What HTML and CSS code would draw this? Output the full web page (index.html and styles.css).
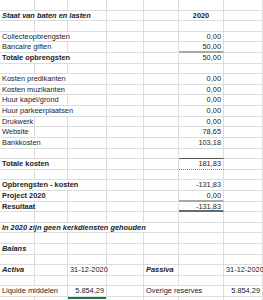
FILE: index.html
```html
<!DOCTYPE html>
<html>
<head>
<meta charset="utf-8">
<link rel="stylesheet" href="styles.css">
</head>
<body>
<div class="sheet">
  <!-- row 1 -->
  <div class="c"></div><div class="c"></div><div class="c"></div><div class="c"></div><div class="c"></div><div class="c"></div><div class="c"></div>
  <!-- row 2 -->
  <div class="c s3 bi">Staat van baten en lasten</div><div class="c"></div><div class="c"></div><div class="c ctr b">2020</div><div class="c"></div>
  <!-- row 3 -->
  <div class="c"></div><div class="c"></div><div class="c"></div><div class="c"></div><div class="c"></div><div class="c"></div><div class="c"></div>
  <!-- row 4 -->
  <div class="c s3">Collecteopbrengsten</div><div class="c"></div><div class="c"></div><div class="c r">0,00</div><div class="c"></div>
  <!-- row 5 -->
  <div class="c s2">Bancaire giften</div><div class="c"></div><div class="c"></div><div class="c"></div><div class="c r line-sub">50,00</div><div class="c"></div>
  <!-- row 6 -->
  <div class="c s3 b">Totale opbrengsten</div><div class="c"></div><div class="c"></div><div class="c r">50,00</div><div class="c"></div>
  <!-- row 7 -->
  <div class="c"></div><div class="c"></div><div class="c"></div><div class="c"></div><div class="c"></div><div class="c"></div><div class="c"></div>
  <!-- row 8 -->
  <div class="c s3">Kosten predikanten</div><div class="c"></div><div class="c"></div><div class="c r">0,00</div><div class="c"></div>
  <!-- row 9 -->
  <div class="c s3">Kosten muzikanten</div><div class="c"></div><div class="c"></div><div class="c r">0,00</div><div class="c"></div>
  <!-- row 10 -->
  <div class="c s2">Huur kapel/grond</div><div class="c"></div><div class="c"></div><div class="c"></div><div class="c r">0,00</div><div class="c"></div>
  <!-- row 11 -->
  <div class="c s3">Huur parkeerplaatsen</div><div class="c"></div><div class="c"></div><div class="c r">0,00</div><div class="c"></div>
  <!-- row 12 -->
  <div class="c">Drukwerk</div><div class="c"></div><div class="c"></div><div class="c"></div><div class="c"></div><div class="c r">0,00</div><div class="c"></div>
  <!-- row 13 -->
  <div class="c">Website</div><div class="c"></div><div class="c"></div><div class="c"></div><div class="c"></div><div class="c r">78,65</div><div class="c"></div>
  <!-- row 14 -->
  <div class="c s2">Bankkosten</div><div class="c"></div><div class="c"></div><div class="c"></div><div class="c r">103,18</div><div class="c"></div>
  <!-- row 15 -->
  <div class="c"></div><div class="c"></div><div class="c"></div><div class="c"></div><div class="c"></div><div class="c line-dark"></div><div class="c"></div>
  <!-- row 16 -->
  <div class="c s2 b">Totale kosten</div><div class="c"></div><div class="c"></div><div class="c"></div><div class="c r line-dot">181,83</div><div class="c"></div>
  <!-- row 17 -->
  <div class="c"></div><div class="c"></div><div class="c"></div><div class="c"></div><div class="c"></div><div class="c"></div><div class="c"></div>
  <!-- row 18 -->
  <div class="c s3 b">Opbrengsten - kosten</div><div class="c"></div><div class="c"></div><div class="c r">-131,83</div><div class="c"></div>
  <!-- row 19 -->
  <div class="c s2 b">Project 2020</div><div class="c"></div><div class="c"></div><div class="c"></div><div class="c r line-sub">0,00</div><div class="c"></div>
  <!-- row 20 -->
  <div class="c b">Resultaat</div><div class="c"></div><div class="c"></div><div class="c"></div><div class="c"></div><div class="c r line-total">-131,83</div><div class="c"></div>
  <!-- row 21 -->
  <div class="c"></div><div class="c"></div><div class="c"></div><div class="c"></div><div class="c"></div><div class="c"></div><div class="c"></div>
  <!-- row 22 -->
  <div class="c s5 bi">In 2020 zijn geen kerkdiensten gehouden</div><div class="c"></div><div class="c"></div>
  <!-- row 23 -->
  <div class="c"></div><div class="c"></div><div class="c"></div><div class="c"></div><div class="c"></div><div class="c"></div><div class="c"></div>
  <!-- row 24 -->
  <div class="c bi">Balans</div><div class="c"></div><div class="c"></div><div class="c"></div><div class="c"></div><div class="c"></div><div class="c"></div>
  <!-- row 25 -->
  <div class="c"></div><div class="c"></div><div class="c"></div><div class="c"></div><div class="c"></div><div class="c"></div><div class="c"></div>
  <!-- row 26 -->
  <div class="c bi">Activa</div><div class="c"></div><div class="c r">31-12-2020</div><div class="c"></div><div class="c bi">Passiva</div><div class="c"></div><div class="c r">31-12-2020</div>
  <!-- row 27 -->
  <div class="c"></div><div class="c"></div><div class="c"></div><div class="c"></div><div class="c"></div><div class="c"></div><div class="c"></div>
  <!-- row 28 -->
  <div class="c s2">Liquide middelen</div><div class="c r">5.854,29</div><div class="c"></div><div class="c s2">Overige reserves</div><div class="c r">5.854,29</div>
  <!-- row 29 -->
  <div class="c"></div><div class="c"></div><div class="c sel"></div><div class="c"></div><div class="c"></div><div class="c"></div><div class="c"></div>
</div>
</body>
</html>
```
FILE: styles.css
```css
html, body {
  margin: 0;
  padding: 0;
  background: #ffffff;
}
body {
  width: 263px;
  height: 300px;
  overflow: hidden;
}
.sheet {
  display: grid;
  grid-template-columns: 35px 33px 39px 37px 35px 45px 39px;
  grid-auto-rows: 10.615px;
  font-family: "Liberation Sans", Arial, sans-serif;
  font-size: 7.4px;
  color: #222222;
}
.c {
  box-sizing: border-box;
  border-right: 1px solid #dcdcdc;
  border-bottom: 1px solid #dcdcdc;
  padding: 0 2px;
  line-height: 10px;
  white-space: nowrap;
  overflow: visible;
}
.s2 { grid-column: span 2; }
.s3 { grid-column: span 3; }
.s5 { grid-column: span 5; }
.r { text-align: right; }
.ctr { text-align: center; }
.b { font-weight: bold; }
.bi { font-weight: bold; font-style: italic; }
.line-sub { border-bottom: 2px solid #a8a8a8; }
.line-dark { border-bottom-color: #555555; }
.line-dot { border-bottom: 1px dotted #777777; }
.line-total { border-bottom: 2px solid #6a6a6a; }
.sel { box-shadow: inset 0 2px 0 #217346; }
```
